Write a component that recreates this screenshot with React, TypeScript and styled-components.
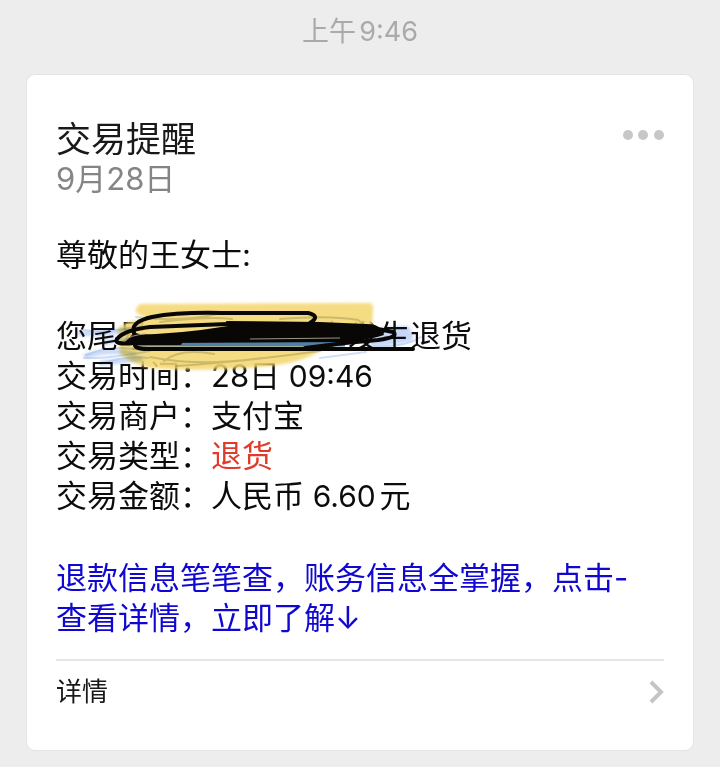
import React from 'react';
import styled, { createGlobalStyle } from 'styled-components';

const GlobalStyle = createGlobalStyle`
  * { box-sizing: border-box; }
  body {
    margin: 0;
    background: #ededed;
    font-family: Inter, 'Noto Sans CJK SC', sans-serif;
    text-autospace: normal;
  }
`;

const Page = styled.main`
  display: flex;
  flex-direction: column;
  padding: 12px 26px 16px;
`;

const Timestamp = styled.time`
  color: #aaa;
  font-size: 27px;
  line-height: 40px;
  text-align: center;
  margin-bottom: 22px;
`;

const Card = styled.article`
  display: flex;
  flex-direction: column;
  background: #fff;
  border: 1px solid #e4e4e4;
  border-radius: 9px;
  padding: 44px 29px 38px;
`;

const Header = styled.header`
  display: flex;
  justify-content: space-between;
  align-items: flex-start;
  margin-bottom: 36px;
`;

const Title = styled.h1`
  margin: 0;
  color: #191919;
  font-size: 35px;
  font-weight: 400;
  line-height: 40px;
`;

const CardDate = styled.p`
  margin: 0;
  color: #858585;
  font-size: 31px;
  line-height: 40px;
  text-autospace: no-autospace;
`;

const IconButton = styled.button`
  display: flex;
  border: 0;
  padding: 0;
  background: none;
  margin-top: 10px;
  cursor: pointer;
`;

const Body = styled.div`
  display: flex;
  flex-direction: column;
  color: #0c0c0c;
  font-size: 31px;
  line-height: 40px;
`;

const Line = styled.p`
  position: relative;
  margin: 0;
`;

const Greeting = styled(Line)`
  margin-bottom: 41px;
`;

const Details = styled.dl`
  margin: 0;
`;

const DetailRow = styled.div`
  display: flex;
`;

const Term = styled.dt``;

const Value = styled.dd<{ $alert?: boolean }>`
  margin: 0;
  color: ${(p) => (p.$alert ? '#e03a2b' : 'inherit')};
`;

const Day = styled.span`
  text-autospace: no-autospace;
`;

const Numeral = styled.span`
  font-size: 30px;
`;

const Redacted = styled.span`
  display: inline-block;
  width: 168px;
`;

const Scribble = styled.svg<{ $tint?: boolean }>`
  position: absolute;
  left: 0;
  top: -20px;
  pointer-events: none;
  mix-blend-mode: ${(p) => (p.$tint ? 'multiply' : 'normal')};
`;

const Promo = styled.a`
  margin-top: 42px;
  color: #1008d0;
  text-decoration: none;
`;

const Footer = styled.a`
  display: flex;
  align-items: center;
  justify-content: space-between;
  margin-top: 21px;
  padding-top: 11px;
  border-top: 2px solid #e6e6e6;
  color: #191919;
  font-size: 26px;
  line-height: 40px;
  text-decoration: none;
`;

const details = [
  { term: '交易时间：', value: <><Day>28日</Day> <Numeral>09:46</Numeral></> },
  { term: '交易商户：', value: '支付宝' },
  { term: '交易类型：', value: '退货', alert: true },
  { term: '交易金额：', value: <>人民币 <Numeral>6.60</Numeral>元</> },
];

function Redaction() {
  return (
    <>
      <Scribble width="400" height="84" viewBox="56 296 400 84" fill="none" aria-hidden="true">
        <defs>
          <filter id="soft" x="-10%" y="-20%" width="120%" height="140%">
            <feGaussianBlur stdDeviation="1.5" />
          </filter>
        </defs>
        <path filter="url(#soft)" d="M140 304 L368 303 Q374 303 373 309 L372 330 L345 334 L322 350 Q300 364 260 367 Q200 372 150 368 Q132 364 120 354 L118 328 Q128 320 150 318 Q128 314 140 304Z" fill="#f4d670" fillOpacity=".88" />
      </Scribble>
      <Scribble $tint width="400" height="84" viewBox="56 296 400 84" fill="none" aria-hidden="true">
        <g stroke="#8fb0f0" strokeLinecap="round" filter="url(#soft)">
          <path d="M80 333 Q100 335 128 330 M104 343 Q120 338 130 342 M86 356 Q112 348 134 354 M102 363 L140 359" strokeOpacity=".5" strokeWidth="5" />
          <path d="M366 340 Q385 343 408 337 M384 332 L406 331" strokeOpacity=".5" strokeWidth="10" />
        </g>
        <g strokeLinecap="round" strokeWidth="2">
          <path d="M136 317 Q180 323 222 313 M160 322 Q210 316 232 319 M280 319 Q330 315 358 320 L364 325 M164 361 Q180 348 214 354 M176 366 Q240 362 320 351 M150 357 Q200 367 262 358" stroke="#97a08e" strokeOpacity=".4" />
          <path d="M84 330 Q104 334 140 326 M86 355 Q112 344 140 350 M84 358 Q108 359 150 351 M100 364 Q126 355 148 358 M320 358 Q350 354 366 352 M374 346 Q404 348 421 337" stroke="#8aaee8" strokeOpacity=".4" />
        </g>
      </Scribble>
      <Scribble width="400" height="84" viewBox="56 296 400 84" fill="none" aria-hidden="true">
        <path d="M135 344 L345 344" stroke="#527fa6" strokeWidth="5" />
        <path d="M132 335 Q180 334 228 326 L226 321 L320 322 L366 324 Q378 324 380 329 L384 335 Q370 340 345 342 L160 343 Q146 345 124 343Z" fill="#080706" />
        <g stroke="#080706" strokeWidth="4" strokeLinecap="round" strokeLinejoin="round">
          <path d="M134 331 Q131 322 152 317 Q178 312 222 313 L308 313 Q321 316 310 323" />
          <path d="M117 339 Q124 330 150 327 L228 324" />
          <path d="M117 339 Q113 345 134 343 L180 343 M134 331 Q131 337 151 337" />
          <path d="M135 345 Q135 349 148 349 L413 349" />
          <path d="M305 348 L345 343 L378 340 Q400 337 393 332 L378 329" />
        </g>
        <path d="M123 341 Q131 335 145 334 M250 339 L340 338" stroke="#9b9685" strokeWidth="1" />
      </Scribble>
    </>
  );
}

export default function App() {
  return (
    <>
      <GlobalStyle />
      <Page>
        <Timestamp>上午9:46</Timestamp>
        <Card>
          <Header>
            <div>
              <Title>交易提醒</Title>
              <CardDate>9月28日</CardDate>
            </div>
            <IconButton type="button" aria-label="更多">
              <svg width="42" height="12" viewBox="0 0 42 12" fill="#c7c7c7">
                <circle cx="6" cy="6" r="5" />
                <circle cx="21" cy="6" r="5" />
                <circle cx="37" cy="6" r="5" />
              </svg>
            </IconButton>
          </Header>
          <Body>
            <Greeting>尊敬的王女士:</Greeting>
            <Line>
              您尾号<Redacted />卡发生退货
              <Redaction />
            </Line>
            <Details>
              {details.map((d) => (
                <DetailRow key={d.term}>
                  <Term>{d.term}</Term>
                  <Value $alert={d.alert}>{d.value}</Value>
                </DetailRow>
              ))}
            </Details>
            <Promo href="#details">
              退款信息笔笔查，账务信息全掌握，点击-<br />
              查看详情，立即了解↓
            </Promo>
          </Body>
          <Footer href="#details">
            详情
            <svg width="18" height="26" viewBox="0 0 18 26" fill="none" aria-hidden="true">
              <path d="M5 3 L15 13 L5 23" stroke="#c4c4c4" strokeWidth="4" />
            </svg>
          </Footer>
        </Card>
      </Page>
    </>
  );
}
